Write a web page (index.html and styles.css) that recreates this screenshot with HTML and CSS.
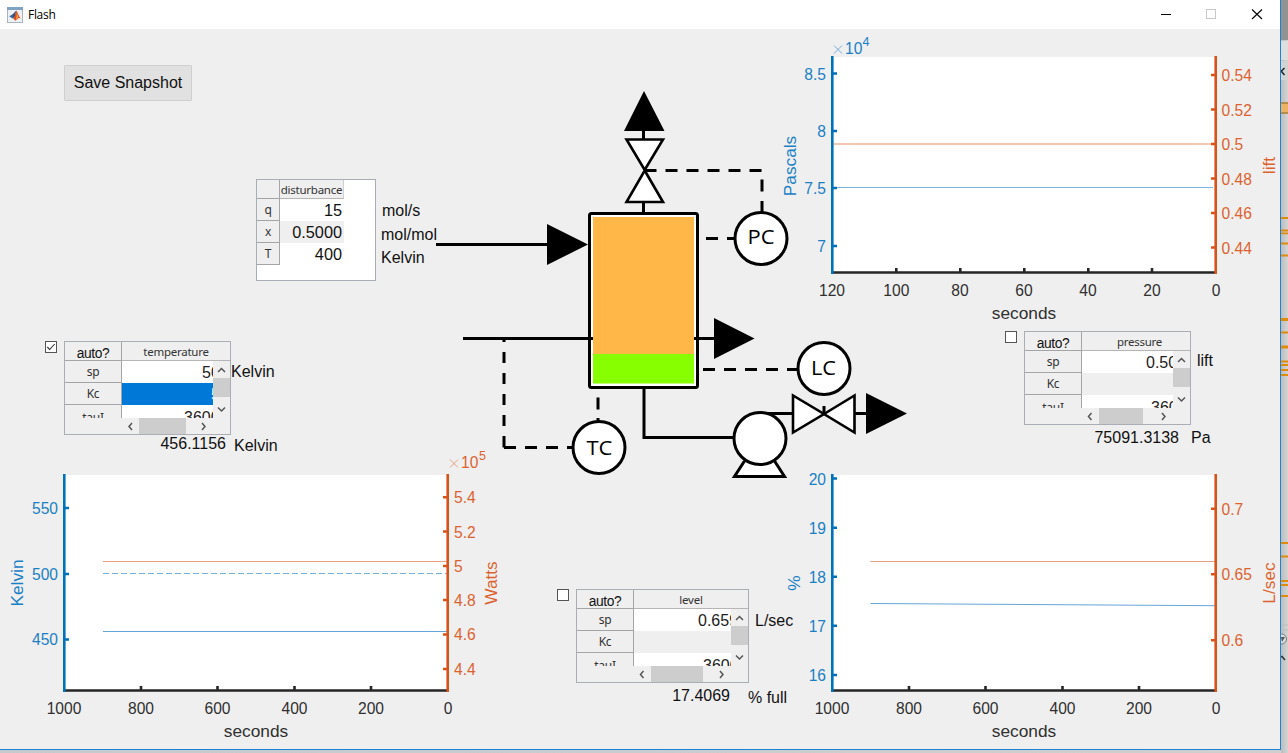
FILE: index.html
```html
<!DOCTYPE html>
<html lang="en">
<head>
<meta charset="utf-8">
<title>Flash</title>
<link rel="stylesheet" href="styles.css">
</head>
<body>
<div class="desktop">
<main class="window">
  <header class="titlebar">
    <svg class="app-icon" width="16" height="16" viewBox="0 0 16 16">
      <rect x=".5" y=".5" width="15" height="15" fill="#eef1f4" stroke="#a9b4be"/>
      <rect x="0" y="0" width="16" height="3" fill="#7fa3c2"/>
      <path d="M2 9.2 5.5 7.5 7.5 9.5 5.5 11.5Z" fill="#2f6fa8"/>
      <path d="M5.5 7.5 9.3 3.5 8 9.5 5.5 11.5Z" fill="#3a4f78"/>
      <path d="M9.3 3.5C10.5 5 11.8 9 13.5 11.5 12 10.5 11 11 10 12.5 9 13.5 8.5 14 7.5 13L6.2 11.2C8 10 8.600 6 9.300 3.500Z" fill="#d8481f"/>
      <path d="M9.500 5C10 8 9.500 11 8.500 13.500 10 13 10.500 11 11.500 9.800Z" fill="#f3a13a"/>
    </svg>
    <span class="title">Flash</span>
    <svg class="controls" width="120" height="29" viewBox="1150 0 120 29" fill="none" shape-rendering="crispEdges">
      <path d="M1161 14.500H1171" stroke="#000"/>
      <rect x="1206.500" y="9.500" width="9" height="9" stroke="#c8c8c8"/>
      <path d="M1252 9.500 1262 19M1262 9.500 1252 19" stroke="#000" shape-rendering="auto" stroke-width="1.100"/>
    </svg>
  </header>

  <div class="canvas">
    <svg class="diagram" width="490" height="410" viewBox="430 80 490 410">
      <g class="pipe">
        <path d="M643.500 130V140M643.500 202V214M436 244.500H548M463 338.500H592M694 338.500H716M644 388V437.500H736M760 413.500H794M854 413.500H868"/>
        <path class="fill" d="M744.500 461 734.500 476.500H784.500L774.500 461"/>
        <rect class="fill" x="589.500" y="213.500" width="108" height="174" rx="2"/>
        <path d="M588 338.500H593M694 338.500H700"/>
        <path class="fill valve" d="M626.500 139.500H663L644.700 170ZM644.700 170.500 663 202H626.500Z"/>
        <path class="fill valve" d="M793 395.500V432.500L824 414ZM824 414 854.500 395.500V432.500Z"/>
        <path d="M644.500 170.500H762.500" stroke-dasharray="12 9"/>
        <path d="M762 179.500V191.500M762 201V213M706 238.500H718M727 238.500H736M504 338V342M504 352V363M504 373V384M504 394V405M504 415V426M504 436V447.500M504 447.500H516M525 447.500H537M546 447.500H558M567 447.500H574M598 397.500V409.500M598 418V423M824 406V414"/>
        <path d="M703 369.500H799" stroke-dasharray="12 9"/>
        <circle class="fill" cx="761" cy="238.500" r="26"/>
        <circle class="fill" cx="824" cy="368.500" r="26"/>
        <circle class="fill" cx="599" cy="447.500" r="26"/>
        <circle class="fill" cx="760" cy="438.500" r="26"/>
      </g>
      <path d="M593 217H694V354H593Z" fill="#ffb847"/>
      <path d="M593 354H694V383.500H593Z" fill="#88ff00"/>
      <path d="M644 91 664.500 131H624ZM547 224 588 244.500 547 265ZM714 318 754.500 338.500 714 359ZM866 393 907 413.500 866 434Z"/>
      <g class="tag">
        <text x="747.500" y="243.700" textLength="27" lengthAdjust="spacingAndGlyphs">PC</text>
        <text x="811" y="374.800" textLength="25" lengthAdjust="spacingAndGlyphs">LC</text>
        <text x="586.500" y="454.800" textLength="26" lengthAdjust="spacingAndGlyphs">TC</text>
      </g>
    </svg>

    <section class="column left">
      <button class="snapshot">Save Snapshot</button>
      <div class="feed">
        <div class="feed-table">
          <span class="rh"></span><span class="ch">disturbance</span>
          <span class="rh">q</span><span class="num">15</span>
          <span class="rh">x</span><span class="num alt">0.5000</span>
          <span class="rh">T</span><span class="num">400</span>
        </div>
        <div class="feed-units"><span>mol/s</span><span>mol/mol</span><span>Kelvin</span></div>
      </div>
      <div class="loop temperature">
        <svg class="check" width="12" height="12" viewBox="0 0 12 12"><rect x=".5" y=".5" width="11" height="11" fill="#fff" stroke="#555"/><path d="M2.300 6 4.700 8.500 9.700 3" fill="none" stroke="#333" stroke-width="1.100"/></svg>
        <div class="grid">
          <span class="auto">auto?</span><span class="ch">temperature</span>
          <div class="rows"><span class="rh">sp</span><span class="rh">Kc</span><span class="rh">tauI</span></div>
          <div class="vals"><span>500</span><span class="sel">5</span><span>3600</span></div>
          <svg class="vbar" width="17" height="57" viewBox="0 0 17 57"><path d="M0 17H17V36H0Z" fill="#cdcdcd"/><path d="M5 11 8.500 7.500 12 11M5 46.500 8.500 50 12 46.500"/></svg>
          <svg class="hbar" width="108" height="16" viewBox="122 0 108 16"><path d="M139 0H186V16H139Z" fill="#cdcdcd"/><path d="M132 5 129 8.500 132 12M202 5 205 8.500 202 12"/></svg>
        </div>
        <span class="unit">Kelvin</span>
        <span class="reading">456.1156</span><span class="reading-unit">Kelvin</span>
      </div>
      <svg class="chart" width="548" height="296" viewBox="0 453 548 296">
        <path d="M64 475H448V691H64Z" fill="#fff"/>
        <path d="M103 573.500H447" stroke="#73b0dc" stroke-dasharray="6 3"/>
        <path d="M103 631.500H447" stroke="#66a5d5"/>
        <path d="M103 561.500H447" stroke="#ea9f80"/>
        <path class="axis" d="M64 690.500H448M141 691V686M217.500 691V686M294.500 691V686M371 691V686"/>
        <path class="axis blue" d="M64.300 474V692M64 508H69M64 574H69M64 639.500H69"/>
        <path class="axis orange" d="M447.700 474V692M448 497.300H443M448 531.500H443M448 566H443M448 600H443M448 634.500H443M448 669H443"/>
        <g class="mid"><text x="64" y="714">1000</text><text x="141" y="714">800</text><text x="217.500" y="714">600</text><text x="294.500" y="714">400</text><text x="371" y="714">200</text><text x="448" y="714">0</text><text class="name" x="256" y="737">seconds</text></g>
        <g class="end"><text x="58" y="514">550</text><text x="58" y="579.500">500</text><text x="58" y="645">450</text></g>
        <g class="start"><text x="454" y="503">5.4</text><text x="454" y="537.500">5.2</text><text x="454" y="571.500">5</text><text x="454" y="606">4.8</text><text x="454" y="640">4.6</text><text x="454" y="674.500">4.4</text><text x="461" y="467.500">10</text><text class="sup" x="479" y="460">5</text></g>
        <path d="M450 459.500 458 467.500M458 459.500 450 467.500" stroke="#e8a080"/>
        <text class="name bl" transform="translate(23 583) rotate(-90)">Kelvin</text>
        <text class="name or" transform="translate(497 583) rotate(-90)">Watts</text>
      </svg>
    </section>

    <section class="column middle">
      <div class="loop level">
        <svg class="check" width="12" height="12" viewBox="0 0 12 12"><rect x=".5" y=".5" width="11" height="11" fill="#fff" stroke="#555"/></svg>
        <div class="grid">
          <span class="auto">auto?</span><span class="ch">level</span>
          <div class="rows"><span class="rh">sp</span><span class="rh">Kc</span><span class="rh">tauI</span></div>
          <div class="vals"><span>0.659</span><span class="alt"></span><span>3600</span></div>
          <svg class="vbar" width="17" height="57" viewBox="0 0 17 57"><path d="M0 17H17V36H0Z" fill="#cdcdcd"/><path d="M5 11 8.500 7.500 12 11M5 46.500 8.500 50 12 46.500"/></svg>
          <svg class="hbar" width="114" height="16" viewBox="634 0 114 16"><path d="M651 0H703V16H651Z" fill="#cdcdcd"/><path d="M643.500 5 640.500 8.500 643.500 12M720 5 723 8.500 720 12"/></svg>
        </div>
        <span class="unit">L/sec</span>
        <span class="reading">17.4069</span><span class="reading-unit">% full</span>
      </div>
    </section>

    <section class="column right">
      <svg class="chart" width="505" height="296" viewBox="775 29 505 296">
        <path d="M832 57H1216V273H832Z" fill="#fff"/>
        <path d="M832 144H1215" stroke="#f5c8b5" stroke-width="2"/>
        <path d="M832 187.500H1213" stroke="#7cb3df"/>
        <path class="axis" d="M832 272.500H1216M896.300 273V268M960.300 273V268M1024.300 273V268M1088.300 273V268M1152 273V268"/>
        <path class="axis blue" d="M832.300 56V274M832 73.500H837M832 131H837M832 188H837M832 246H837"/>
        <path class="axis orange" d="M1215.700 56V274M1216 75H1211M1216 109.500H1211M1216 144H1211M1216 178.500H1211M1216 213H1211M1216 247.500H1211"/>
        <g class="mid"><text x="832" y="296">120</text><text x="896.300" y="296">100</text><text x="960" y="296">80</text><text x="1024" y="296">60</text><text x="1088" y="296">40</text><text x="1152" y="296">20</text><text x="1216" y="296">0</text><text class="name" x="1024" y="319">seconds</text></g>
        <g class="end"><text x="826" y="80">8.5</text><text x="826" y="137">8</text><text x="826" y="194">7.5</text><text x="826" y="251.500">7</text></g>
        <g class="start"><text x="1221.500" y="81">0.54</text><text x="1221.500" y="115.500">0.52</text><text x="1221.500" y="150">0.5</text><text x="1221.500" y="184.500">0.48</text><text x="1221.500" y="219">0.46</text><text x="1221.500" y="253.500">0.44</text></g>
        <g class="start bl"><text x="845" y="53.500">10</text><text class="sup" x="862.500" y="46">4</text></g>
        <path d="M834 45.500 842 53.500M842 45.500 834 53.500" stroke="#73b0dc"/>
        <text class="name bl" transform="translate(796 166) rotate(-90)">Pascals</text>
        <text class="name or" transform="translate(1275 165.500) rotate(-90)">lift</text>
      </svg>
      <div class="loop pressure">
        <svg class="check" width="12" height="12" viewBox="0 0 12 12"><rect x=".5" y=".5" width="11" height="11" fill="#fff" stroke="#555"/></svg>
        <div class="grid">
          <span class="auto">auto?</span><span class="ch">pressure</span>
          <div class="rows"><span class="rh">sp</span><span class="rh">Kc</span><span class="rh">tauI</span></div>
          <div class="vals"><span>0.50</span><span class="alt"></span><span>360</span></div>
          <svg class="vbar" width="17" height="57" viewBox="0 0 17 57"><path d="M0 17H17V36H0Z" fill="#cdcdcd"/><path d="M5 11 8.500 7.500 12 11M5 46.500 8.500 50 12 46.500"/></svg>
          <svg class="hbar" width="108" height="16" viewBox="1082 0 108 16"><path d="M1099 0H1143V16H1099Z" fill="#cdcdcd"/><path d="M1091.500 5 1088.500 8.500 1091.500 12M1162 5 1165 8.500 1162 12"/></svg>
        </div>
        <span class="unit">lift</span>
        <span class="reading">75091.3138</span><span class="reading-unit">Pa</span>
      </div>
      <svg class="chart" width="505" height="296" viewBox="775 453 505 296">
        <path d="M832 475H1216V691H832Z" fill="#fff"/>
        <path d="M870.500 561.500H1215" stroke="#ea9f80"/>
        <path d="M870.500 603.500 1215 605.700" stroke="#66a5d5" fill="none"/>
        <path class="axis" d="M832 690.500H1216M909 691V686M985.500 691V686M1062.500 691V686M1139 691V686"/>
        <path class="axis blue" d="M832.300 474V692M832 478.500H837M832 527.700H837M832 576.700H837M832 625.700H837M832 675H837"/>
        <path class="axis orange" d="M1215.700 474V692M1216 508.700H1211M1216 574.300H1211M1216 640.300H1211"/>
        <g class="mid"><text x="832" y="714">1000</text><text x="909" y="714">800</text><text x="985.500" y="714">600</text><text x="1062.500" y="714">400</text><text x="1139" y="714">200</text><text x="1216" y="714">0</text><text class="name" x="1024" y="737">seconds</text></g>
        <g class="end"><text x="826" y="485">20</text><text x="826" y="534">19</text><text x="826" y="583">18</text><text x="826" y="632">17</text><text x="826" y="681">16</text></g>
        <g class="start"><text x="1221.500" y="515">0.7</text><text x="1221.500" y="580">0.65</text><text x="1221.500" y="646">0.6</text></g>
        <text class="name bl" transform="translate(800 583) rotate(-90)">%</text>
        <text class="name or" transform="translate(1275 583) rotate(-90)">L/sec</text>
      </svg>
    </section>
  </div>
</main>
<svg class="behind" width="7" height="753" viewBox="1281 0 7 753">
  <path d="M1281 0H1288V40H1281Z" fill="#929292"/>
  <path d="M1281 41H1288V60H1281Z" fill="#dedede"/>
  <path d="M1281 61H1288V80H1281Z" fill="#d3d3d3"/>
  <path d="M1280 72 1281.500 71 1284.500 68M1281.500 71.500 1284.500 75" stroke="#222" stroke-width="1.500" fill="none"/>
  <path d="M1281 102H1288V114H1281Z" fill="#b98b48"/><path d="M1281 104H1288V112H1281Z" fill="#eeb362"/>
  <g fill="none" stroke="#e18b0d" stroke-width="1.800">
    <path d="M1281 218H1288M1281 230.500H1288M1281 233.300H1288M1281 243.500H1288M1281 255.500H1288M1281 332.500H1288M1281 361.500H1288M1281 365H1288M1281 370H1288M1281 375H1288M1281 543H1288M1281 556.500H1288M1281 581H1288M1281 585H1288M1281 596H1288"/>
    <path stroke-width="3" d="M1281 319.500H1288M1281 347H1288"/>
  </g>
  <path d="M1281 625H1288M1281 630H1288" stroke="#bcbcbc"/>
  <circle cx="1281.500" cy="639" r="5" fill="#ddd" stroke="#777"/><path d="M1281 637H1285L1282 642Z" fill="#555"/>
  <path d="M1281 657 1282 656.500 1285 660" stroke="#333" stroke-width="1.500" fill="none"/>
</svg>
</div>
</body>
</html>
```

FILE: styles.css
```css
* { box-sizing: border-box; }
body {
  margin: 0;
  overflow: hidden;
  font: 16px/18px "Liberation Sans", Arial, sans-serif;
  color: #111;
}
.desktop {
  display: flex;
  width: 1288px;
  height: 753px;
  background: linear-gradient(90deg, #c4cace, #cfcfcf);
}
.window {
  display: flex;
  flex-direction: column;
  width: 1281px;
  height: 750px;
  background: #efefef;
  border-right: 1px solid #1b83d5;
  border-bottom: 1px solid #1b83d5;
}
.behind { background: linear-gradient(90deg, #bdbdbd, #d4d4d4); }

.titlebar {
  display: flex;
  align-items: center;
  flex: none;
  height: 29px;
  padding-left: 7px;
  background: #fff;
}
.title {
  margin-left: 5px;
  font: 12px/29px "Open Sans", sans-serif;
  letter-spacing: -.3px;
  color: #000;
}
.controls { margin-left: auto; margin-right: 10px; }

.canvas { position: relative; display: flex; height: 720px; }
.diagram { position: absolute; left: 430px; top: 51px; }
.column { display: flex; flex-direction: column; align-items: flex-start; }
.left { width: 548px; }
.middle { width: 227px; }
.right { width: 505px; }

.pipe { fill: none; stroke: #000; stroke-width: 3; }
.pipe .fill { fill: #fff; }
.pipe .valve { stroke-width: 2.600; }
.tag { font: 20.500px "Open Sans", sans-serif; }

.snapshot {
  width: 128px;
  height: 36px;
  margin: 36px 0 78px 64px;
  padding: 0;
  border: 1px solid #cfcfcf;
  border-radius: 1px;
  background: #e1e1e1;
  font: 16px "Liberation Sans", Arial, sans-serif;
  color: #111;
}

.feed { display: flex; margin-left: 256px; height: 102px; }
.feed-table {
  display: grid;
  grid-template-columns: 23px 64px;
  grid-template-rows: 19px repeat(3, 22px);
  width: 120px;
  border: 1px solid #a9aeb6;
  background: #fff;
}
.rh {
  background: #efefef;
  border-right: 1px solid #a5a5a8;
  border-bottom: 1px solid #a5a5a8;
  font: 12px/22px "Noto Sans", sans-serif;
  letter-spacing: -.3px;
  color: #333;
  text-align: center;
}
.ch {
  background: #efefef;
  border-right: 1px solid #d0d0d0;
  border-bottom: 1px solid #b5b5b5;
  font: 11.500px/20px "Noto Sans", sans-serif;
  letter-spacing: -.25px;
  color: #333;
  text-align: center;
}
.num { padding-right: 2px; font-size: 16.300px; line-height: 23px; text-align: right; }
.alt { background: #efefef; }
.feed-units { display: flex; flex-direction: column; gap: 5.500px; padding: 23px 0 0 5px; }
.feed-units span:first-child { padding-left: 1px; }

.loop {
  display: grid;
  grid-template-columns: 19px 167px auto;
  grid-template-rows: 94px 18px;
  white-space: nowrap;
}
.temperature { margin: 60px 0 0 45px; }
.pressure { margin: 6px 0 10px 230px; }
.level { grid-template-columns: 19px 173px auto; margin: 560px 0 0 9px; }

.grid {
  display: grid;
  grid-template-columns: 57px 1fr 17px;
  grid-template-rows: 19px 57px 16px;
  border: 1px solid #abaeb5;
}
.auto {
  border-right: 1px solid #a5a5a8;
  border-bottom: 1px solid #a5a5a8;
  font-size: 13.800px;
  letter-spacing: -.4px;
  line-height: 23px;
  text-align: center;
}
.grid .ch { grid-column: 2 / 4; border-right: 0; }
.pressure .ch { padding-left: 7px; }
.rows, .vals { display: flex; flex-direction: column; overflow: hidden; }
.rows .rh, .vals span { flex: none; height: 22px; }
.rows .rh:last-child { line-height: 25px; }
.vals { background: #fff; align-items: stretch; }
.vals span {
  overflow: hidden;
  font-size: 16px;
  line-height: 23px;
  color: #222;
}
.vals span:last-child { line-height: 25px; }
.temperature .vals span { padding-left: 80px; }
.temperature .vals span:last-child { padding-left: 62px; }
.temperature .vals .sel { padding-left: 89px; background: #0078d7; color: #fff; }
.pressure .vals span { padding-left: 64px; }
.pressure .vals span:last-child { padding-left: 69px; }
.level .vals span { padding-left: 64px; }
.level .vals span:last-child { padding-left: 69px; }
.vbar, .hbar { display: block; fill: none; stroke: #555; stroke-width: 1.500; }
.vbar path:first-child, .hbar path:first-child { stroke: none; }
.hbar { grid-column: 2 / 4; }
.unit { align-self: start; padding-top: 22px; }
.pressure .unit { padding: 21px 0 0 6px; }
.level .unit { padding: 23px 0 0 6px; }
.reading { grid-column: 1 / 3; padding-right: 5px; text-align: right; }
.reading-unit { padding: 2px 0 0 3px; }
.pressure .reading { padding: 4px 12px 0 0; }
.pressure .reading-unit { padding: 4px 0 0 0; }
.level .reading { padding: 4px 19px 0 0; }
.level .reading-unit { padding: 6px 0 0 0; margin-left: -1px; }

.check { margin-top: 0; }
.chart { display: block; flex: none; overflow: visible; font-size: 15.600px; }
.axis { fill: none; stroke: #262626; stroke-width: 2.600; }
.axis.blue { stroke: #0072bd; }
.axis.orange { stroke: #d95319; }
.mid { text-anchor: middle; fill: #303030; }
.end { text-anchor: end; fill: #1a80c4; }
.start { fill: #dc6330; }
.name { font-size: 17.300px; text-anchor: middle; }
.sup { font-size: 12.500px; }
.bl { fill: #1a80c4; }
.or { fill: #dc6330; }
```
